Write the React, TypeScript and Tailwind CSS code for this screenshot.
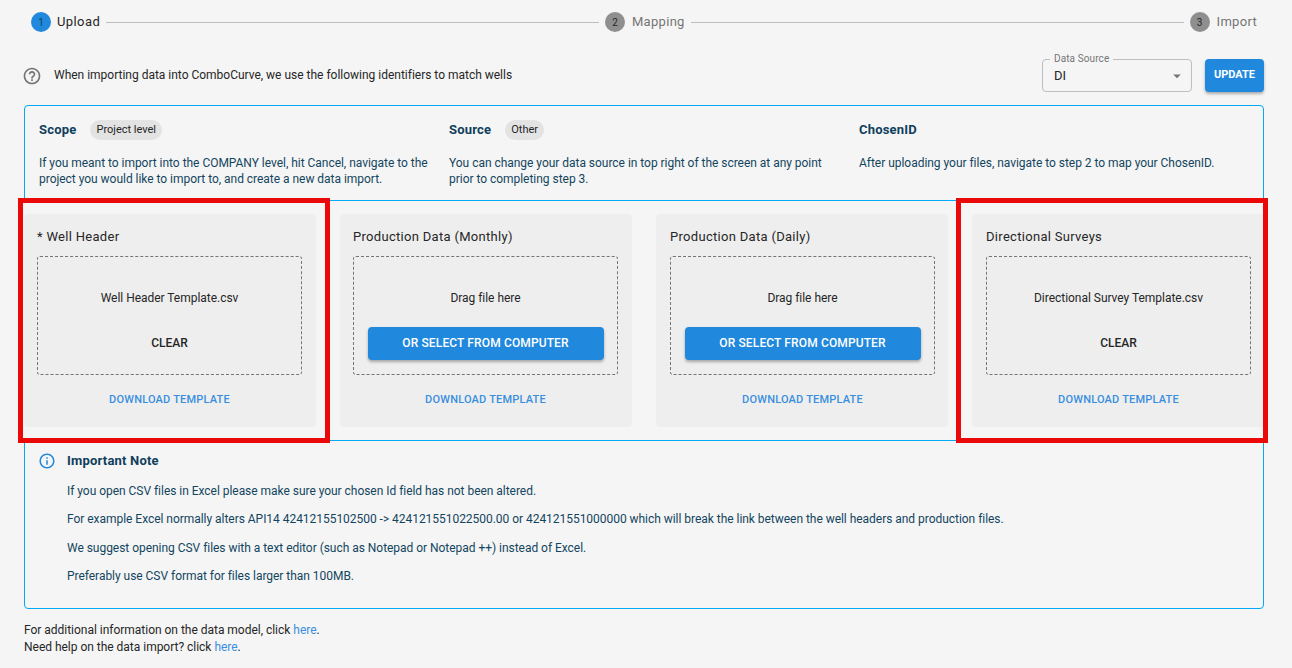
import React from "react";

function Step({ n, label, active }: { n: number; label: string; active?: boolean }) {
  return (
    <div className="flex items-center shrink-0">
      <div
        className={
          active
            ? "w-5 h-5 rounded-full bg-[#2088dd] text-[#0f3f5c] text-[10px] flex items-center justify-center"
            : "w-5 h-5 rounded-full bg-[#8f8f8f] text-[#262626] text-[10px] flex items-center justify-center"
        }
      >
        {n}
      </div>
      <span
        className={
          active
            ? "ml-[6px] text-[13px] tracking-[0.4px] text-[#262626]"
            : "ml-[7px] text-[13px] tracking-[0.3px] text-[#757575]"
        }
      >
        {label}
      </span>
    </div>
  );
}

function Card({ title, file, shifted }: { title: string; file?: string; shifted?: boolean }) {
  return (
    <div
      className={
        shifted
          ? "bg-[#eeeeee] rounded-[4px] h-[213px] pl-[14px] pr-[13px] flex flex-col"
          : "bg-[#eeeeee] rounded-[4px] h-[213px] pl-[13px] pr-[14px] flex flex-col"
      }
    >
      <div className="mt-[15px] h-[16px] leading-[16px] text-[13px] tracking-[0.3px] text-[#262626]">{title}</div>
      <div className="mt-[11px] h-[119px] border border-dashed border-[#757575] rounded-[3px] flex flex-col items-center">
        <div className="mt-[33px] h-[16px] leading-[16px] text-[12px] tracking-[-0.03px] text-[#262626]">
          {file ?? "Drag file here"}
        </div>
        {file ? (
          <div className="mt-[21px] h-[33px] leading-[33px] text-[12px] font-medium text-[#262626]">CLEAR</div>
        ) : (
          <button className="mt-[21px] w-[236px] h-[33px] pb-[1px] rounded-[4px] bg-[#2088dd] text-white text-[12px] font-medium tracking-[0.13px] shadow-[0_2px_3px_rgba(0,0,0,0.3)]">
            OR SELECT FROM COMPUTER
          </button>
        )}
      </div>
      <div className="mt-[17px] h-[16px] leading-[16px] text-center text-[11px] font-medium tracking-[0.2px] text-[#3a8ee0]">
        DOWNLOAD TEMPLATE
      </div>
    </div>
  );
}

function Info({ title, chip, text }: { title: string; chip?: string; text: React.ReactNode }) {
  return (
    <div>
      <div className="h-[20px] flex items-center">
        <span className="text-[13px] font-bold tracking-[0.2px] text-[#0f3f5c]">{title}</span>
        {chip && (
          <span className="ml-[14px] h-[20px] px-[6px] rounded-full bg-[#e3e3e3] text-[#262626] text-[11px] leading-[19px]">
            {chip}
          </span>
        )}
      </div>
      <p className="mt-[15px] text-[12px] tracking-[-0.03px] leading-[16px] text-[#134560]">{text}</p>
    </div>
  );
}

export default function App() {
  return (
    <div
      className="relative w-[1292px] h-[668px] overflow-hidden bg-[#f5f5f5]"
      style={{ fontFamily: "Roboto, sans-serif" }}
    >
      <div className="flex items-center h-[20px] mt-[12px] pl-[31px] pr-[35px] gap-[6px]">
        <Step n={1} label="Upload" active />
        <div className="flex-1 h-px bg-[#bdbdbd]" />
        <Step n={2} label="Mapping" />
        <div className="flex-1 h-px bg-[#bdbdbd]" />
        <Step n={3} label="Import" />
      </div>

      <div className="flex items-center h-[33px] mt-[27px] pl-[24px] pr-[28px]">
        <svg viewBox="0 0 24 24" className="w-[20px] h-[20px] -ml-[2px] fill-[#757575]">
          <path d="M11 18h2v-2h-2v2zm1-16C6.48 2 2 6.48 2 12s4.48 10 10 10 10-4.48 10-10S17.52 2 12 2zm0 18c-4.41 0-8-3.59-8-8s3.59-8 8-8 8 3.59 8 8-3.59 8-8 8zm0-14c-2.21 0-4 1.79-4 4h2c0-1.1.9-2 2-2s2 .9 2 2c0 2-3 1.75-3 5h2c0-2.25 3-2.5 3-5 0-2.21-1.79-4-4-4z" />
        </svg>
        <span className="ml-[12px] -mt-[2px] text-[12px] tracking-[-0.01px] text-[#262626] flex-1">
          When importing data into ComboCurve, we use the following identifiers to match wells
        </span>
        <div className="relative w-[150px] h-[33px] border border-[#bdbdbd] rounded-[4px] flex items-center pl-[11px] pr-[5px] justify-between">
          <span className="absolute left-[7px] -top-[7px] px-[4px] bg-[#f5f5f5] text-[10px] leading-[12px] tracking-[0.1px] text-[#757575]">
            Data Source
          </span>
          <span className="text-[13px] text-[#262626]">DI</span>
          <svg viewBox="0 0 24 24" className="w-[18px] h-[18px] fill-[#757575]">
            <path d="M7 10l5 5 5-5z" />
          </svg>
        </div>
        <button className="ml-[13px] w-[59px] h-[33px] rounded-[4px] bg-[#2088dd] text-white text-[11px] font-bold shadow-[0_2px_3px_rgba(0,0,0,0.3)]">
          UPDATE
        </button>
      </div>

      <div className="mt-[13px] ml-[24px] w-[1240px] h-[504px] border border-[#03a9f4] rounded-[4px]">
        <div className="h-[94px] pt-[14px] pl-[14px] pr-[8px] grid grid-cols-[390px_390px_1fr] gap-x-[20px]">
          <Info
            title="Scope"
            chip="Project level"
            text={
              <>
                If you meant to import into the COMPANY level, hit Cancel, navigate to the
                <br />
                project you would like to import to, and create a new data import.
              </>
            }
          />
          <Info
            title="Source"
            chip="Other"
            text={
              <>
                You can change your data source in top right of the screen at any point
                <br />
                prior to completing step 3.
              </>
            }
          />
          <Info title="ChosenID" text="After uploading your files, navigate to step 2 to map your ChosenID." />
        </div>
        <div className="relative -mx-[1px] h-[241px] bg-[#f5f5f5] border-y border-[#03a9f4] grid grid-cols-4 gap-x-[24px] pt-[13px]">
          <Card title="* Well Header" file="Well Header Template.csv" />
          <Card title="Production Data (Monthly)" />
          <Card title="Production Data (Daily)" shifted />
          <Card title="Directional Surveys" file="Directional Survey Template.csv" shifted />
        </div>
        <div className="pl-[13px] pt-[11px] text-[#134560]">
          <div className="flex items-center h-[18px]">
            <svg viewBox="0 0 24 24" className="w-[18px] h-[18px] fill-[#2088dd]">
              <path d="M11 7h2v2h-2zm0 4h2v6h-2zm1-9C6.48 2 2 6.48 2 12s4.48 10 10 10 10-4.48 10-10S17.52 2 12 2zm0 18c-4.41 0-8-3.59-8-8s3.59-8 8-8 8 3.59 8 8-3.59 8-8 8z" />
            </svg>
            <span className="ml-[11px] text-[13px] font-bold tracking-[0.2px] text-[#0f3f5c]">Important Note</span>
          </div>
          <div className="pl-[29px] mt-[13px] flex flex-col gap-[12.3px] text-[12px] tracking-[-0.035px] leading-[16px]">
            <p>If you open CSV files in Excel please make sure your chosen Id field has not been altered.</p>
            <p>
              For example Excel normally alters API14 42412155102500 -&gt; 424121551022500.00 or 424121551000000 which
              will break the link between the well headers and production files.
            </p>
            <p>We suggest opening CSV files with a text editor (such as Notepad or Notepad ++) instead of Excel.</p>
            <p>Preferably use CSV format for files larger than 100MB.</p>
          </div>
        </div>
      </div>

      <div className="mt-[13px] ml-[24px] text-[12px] tracking-[-0.02px] leading-[17px] text-[#262626]">
        <p>
          For additional information on the data model, click <span className="text-[#3a8ee0]">here</span>.
        </p>
        <p>
          Need help on the data import? click <span className="text-[#3a8ee0]">here</span>.
        </p>
      </div>

      <div className="absolute left-[18px] top-[198px] w-[312px] h-[245px] border-[5px] border-[#ea0808]" />
      <div className="absolute left-[956px] top-[198px] w-[312px] h-[245px] border-[5px] border-[#ea0808]" />
    </div>
  );
}
